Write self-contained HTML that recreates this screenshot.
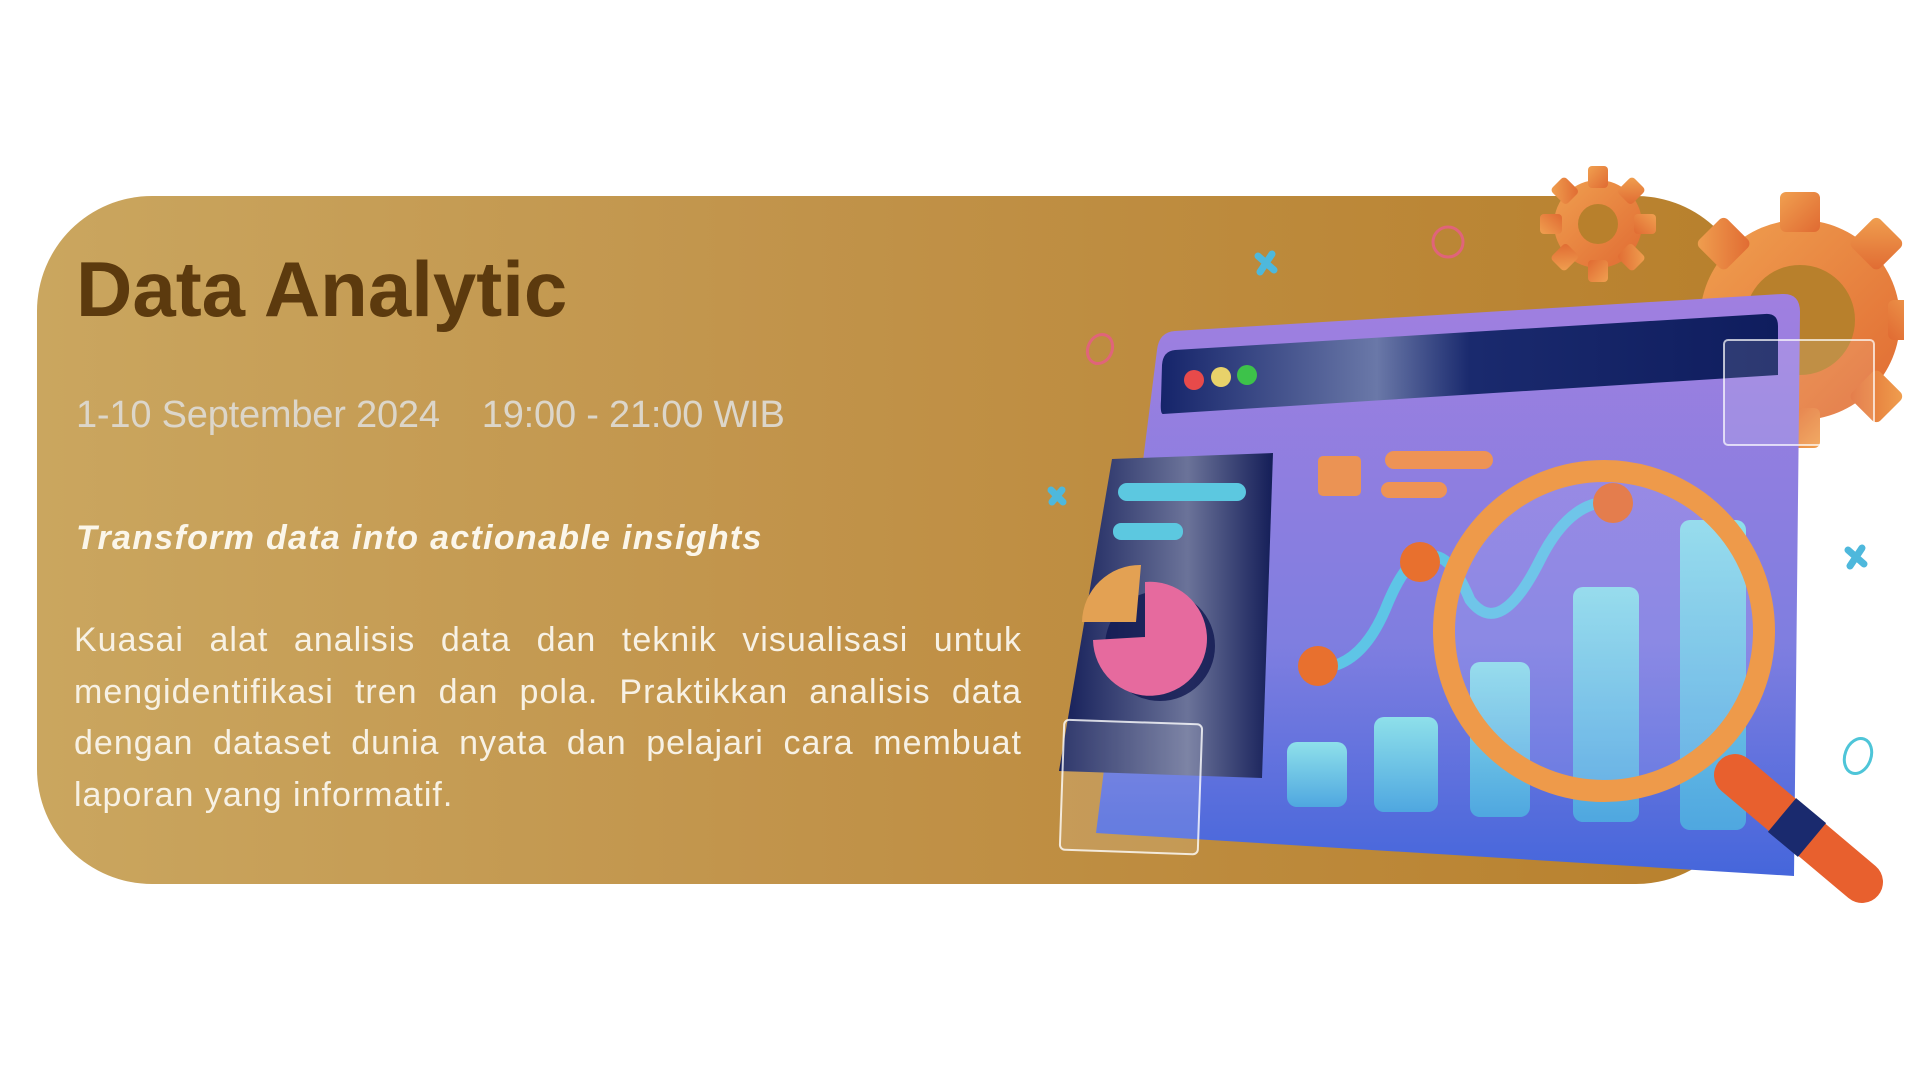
<!DOCTYPE html>
<html><head><meta charset="utf-8"><style>
html,body{margin:0;padding:0;background:#fff;width:1920px;height:1080px;overflow:hidden}
.card{position:absolute;left:37px;top:196px;width:1714px;height:688px;border-radius:115px;background:linear-gradient(90deg,#caa65f 0%,#c1934a 45%,#b8802c 100%)}
.t{position:absolute;font-family:"Liberation Sans",sans-serif}
h1{position:absolute;left:76px;top:250px;margin:0;font:bold 78px/1 "Liberation Sans",sans-serif;color:#5c3a0e;letter-spacing:0px}
.date{left:76px;top:394px;font-size:38px;color:#dcd6ca;letter-spacing:-0.2px;white-space:nowrap}
.date span{margin-left:42px}
.sub{left:76px;top:519px;font-size:34px;font-weight:bold;font-style:italic;color:#fbf6ea;white-space:nowrap;letter-spacing:1.3px}
.p{left:74px;top:615px;width:948px;font-size:34px;line-height:51.5px;color:#f7f1e4;text-align:justify;letter-spacing:1px}
svg{position:absolute;left:0;top:0}
</style></head><body>
<div class="card"></div>
<h1>Data Analytic</h1>
<div class="t date">1-10 September 2024<span>19:00 - 21:00 WIB</span></div>
<div class="t sub">Transform data into actionable insights</div>
<div class="t p">Kuasai alat analisis data dan teknik visualisasi untuk mengidentifikasi tren dan pola. Praktikkan analisis data dengan dataset dunia nyata dan pelajari cara membuat laporan yang informatif.</div>
<svg width="1920" height="1080" viewBox="0 0 1920 1080">
<defs>
<linearGradient id="pan" x1="0" y1="0" x2="0" y2="1"><stop offset="0" stop-color="#a07fe0"/><stop offset=".6" stop-color="#7f7ee0"/><stop offset="1" stop-color="#4566db"/></linearGradient>
<linearGradient id="bar" x1="0" y1="0" x2="0" y2="1"><stop offset="0" stop-color="#8ee0ea"/><stop offset="1" stop-color="#4fa7e0"/></linearGradient>
<linearGradient id="hd" x1="0" y1="0" x2="1" y2="0"><stop offset="0" stop-color="#15246a"/><stop offset=".35" stop-color="#6a78a8"/><stop offset=".5" stop-color="#1a2a6e"/><stop offset="1" stop-color="#0f1d5e"/></linearGradient>
<linearGradient id="sc" x1="0" y1="0" x2="1" y2="0"><stop offset="0" stop-color="#131d58"/><stop offset=".6" stop-color="#6b7399"/><stop offset="1" stop-color="#141e58"/></linearGradient>
<linearGradient id="og" x1="0" y1="0" x2="1" y2="1"><stop offset="0" stop-color="#f0a050"/><stop offset="1" stop-color="#e06a32"/></linearGradient>
</defs>
<g fill="url(#og)">
<circle cx="1598" cy="224" r="44"/>
<g transform="translate(1598,224)"><rect x="-10" y="-58" width="20" height="22" rx="4"/><rect x="-10" y="-58" width="20" height="22" rx="4" transform="rotate(45)"/><rect x="-10" y="-58" width="20" height="22" rx="4" transform="rotate(90)"/><rect x="-10" y="-58" width="20" height="22" rx="4" transform="rotate(135)"/><rect x="-10" y="-58" width="20" height="22" rx="4" transform="rotate(180)"/><rect x="-10" y="-58" width="20" height="22" rx="4" transform="rotate(225)"/><rect x="-10" y="-58" width="20" height="22" rx="4" transform="rotate(270)"/><rect x="-10" y="-58" width="20" height="22" rx="4" transform="rotate(315)"/></g>
<circle cx="1800" cy="320" r="100"/>
<g transform="translate(1800,320)"><rect x="-20" y="-128" width="40" height="40" rx="6"/><rect x="-20" y="-128" width="40" height="40" rx="6" transform="rotate(45)"/><rect x="-20" y="-128" width="40" height="40" rx="6" transform="rotate(90)"/><rect x="-20" y="-128" width="40" height="40" rx="6" transform="rotate(135)"/><rect x="-20" y="-128" width="40" height="40" rx="6" transform="rotate(180)"/><rect x="-20" y="-128" width="40" height="40" rx="6" transform="rotate(-45)"/></g>
</g>
<circle cx="1598" cy="224" r="20" fill="#b8802c"/>
<circle cx="1800" cy="320" r="55" fill="#b8802c"/>
<rect x="1904" y="150" width="16" height="400" fill="#fff"/>
<path d="M1175 331 L1782 294 Q1800 293 1800 312 L1794 876 L1096 833 L1157 350 Q1159 332 1175 331Z" fill="url(#pan)"/>
<path d="M1175 350 L1765 314 Q1778 313 1778 326 L1778 375 L1163 414 Q1160 414 1161 400 L1162 365 Q1163 351 1175 350Z" fill="url(#hd)"/>
<circle cx="1194" cy="380" r="10" fill="#e84a4a"/><circle cx="1221" cy="377" r="10" fill="#e8d26a"/><circle cx="1247" cy="375" r="10" fill="#3dc24a"/>
<rect x="1724" y="340" width="150" height="105" rx="4" fill="rgba(255,255,255,.12)" stroke="rgba(255,255,255,.7)" stroke-width="2"/>
<path d="M1112 459 L1273 453 L1262 778 L1059 771Z" fill="url(#sc)"/>
<rect x="1118" y="483" width="128" height="18" rx="9" fill="#5cc8e0"/>
<rect x="1113" y="523" width="70" height="17" rx="8" fill="#5cc8e0"/>
<circle cx="1160" cy="646" r="55" fill="#101850" opacity=".8"/>
<path d="M1145 637 L1145 582 A57 57 0 1 1 1093 640 Z" fill="#e66a9e"/>
<path d="M1136 622 L1082 622 A58 58 0 0 1 1141 565 Z" fill="#e3a153"/>
<rect x="1318" y="456" width="43" height="40" rx="5" fill="#eb9354"/>
<rect x="1385" y="451" width="108" height="18" rx="9" fill="#ee9355"/>
<rect x="1381" y="482" width="66" height="16" rx="8" fill="#ee9355"/>
<rect x="1287" y="742" width="60" height="65" rx="10" fill="url(#bar)"/>
<rect x="1374" y="717" width="64" height="95" rx="10" fill="url(#bar)"/>
<rect x="1470" y="662" width="60" height="155" rx="10" fill="url(#bar)"/>
<rect x="1573" y="587" width="66" height="235" rx="10" fill="url(#bar)"/>
<rect x="1680" y="520" width="66" height="310" rx="10" fill="url(#bar)"/>
<path d="M1318 668 Q1360 668 1385 610 Q1405 560 1420 562 M1420 562 Q1445 540 1470 600 Q1500 640 1540 560 Q1570 500 1612 502" fill="none" stroke="#5ec5e6" stroke-width="11" stroke-linecap="round"/>
<circle cx="1318" cy="666" r="20" fill="#e8702e"/><circle cx="1420" cy="562" r="20" fill="#e8702e"/><circle cx="1613" cy="503" r="20" fill="#e8702e"/>
<circle cx="1604" cy="631" r="150" fill="rgba(210,200,255,.15)"/>
<line x1="1735" y1="775" x2="1862" y2="882" stroke="#e8602e" stroke-width="42" stroke-linecap="round"/>
<line x1="1782" y1="815" x2="1812" y2="840" stroke="#1a2a6e" stroke-width="44"/>
<circle cx="1604" cy="631" r="160" fill="none" stroke="#ee9a4a" stroke-width="22"/>
<rect x="1062" y="722" width="138" height="130" rx="5" transform="rotate(2 1130 787)" fill="rgba(255,255,255,.12)" stroke="rgba(255,255,255,.8)" stroke-width="2"/>
<circle cx="1448" cy="242" r="15" fill="none" stroke="#e0647a" stroke-width="3"/>
<ellipse cx="1100" cy="349" rx="12" ry="15" transform="rotate(25 1100 349)" fill="none" stroke="#e0647a" stroke-width="3"/>
<ellipse cx="1858" cy="756" rx="13" ry="18" transform="rotate(20 1858 756)" fill="none" stroke="#4ec5d8" stroke-width="3"/>
<g stroke="#4eb8dc" stroke-width="7" stroke-linecap="round">
<path d="M1258 256 L1274 270 M1272 254 L1260 272"/>
<path d="M1051 490 L1063 502 M1062 490 L1052 502"/>
<path d="M1848 550 L1864 564 M1862 548 L1850 566"/>
</g>
</svg>
</body></html>
